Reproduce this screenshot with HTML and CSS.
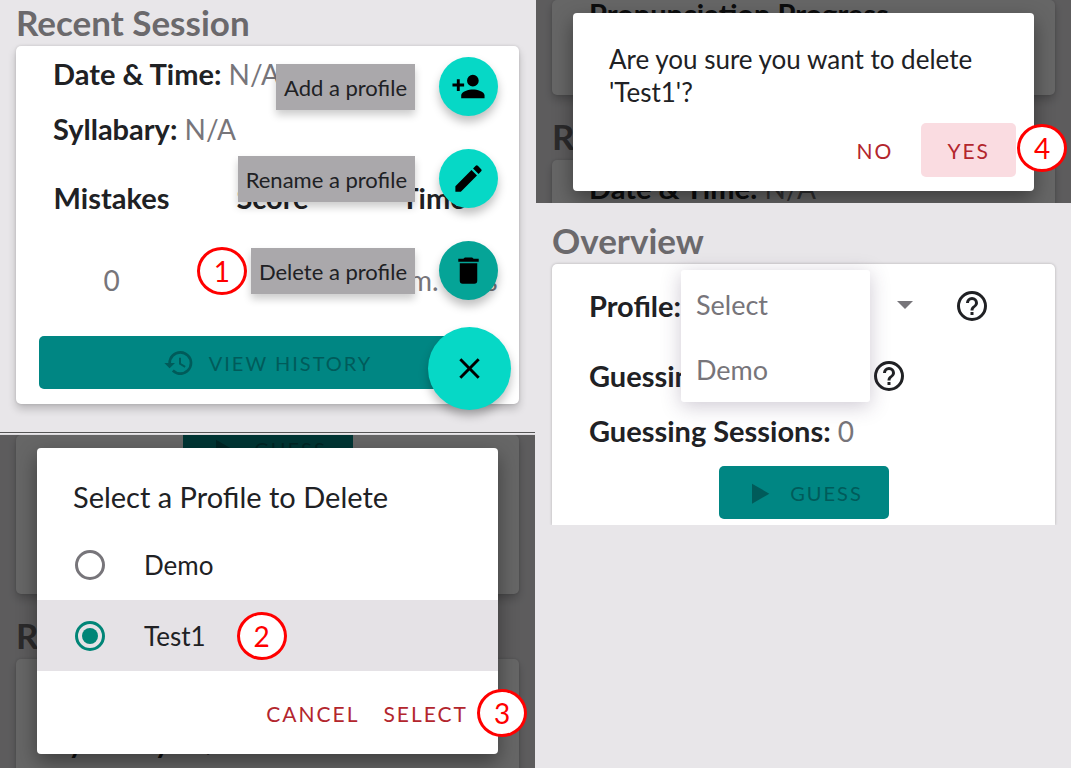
FILE: index.html
```html
<!DOCTYPE html>
<html lang="en">
<head>
<meta charset="utf-8">
<meta name="viewport" content="width=device-width, initial-scale=1">
<title>Delete a profile</title>
<link rel="stylesheet" href="styles.css">
</head>
<body>
<main class="board">
  <div class="column">
    <section class="panel panel-recent">
      <h2 class="heading">Recent Session</h2>
      <div class="card">
        <p class="row"><b>Date &amp; Time:</b> N/A</p>
        <p class="row"><b>Syllabary:</b> N/A</p>
        <table class="stats">
          <thead><tr><th>Mistakes</th><th>Score</th><th>Time</th></tr></thead>
          <tbody><tr><td>0</td><td></td><td>00 m. 00 s</td></tr></tbody>
        </table>
        <button class="btn btn-wide" type="button">
          <svg class="icon" viewBox="0 0 24 24" fill="currentColor" aria-hidden="true"><path d="M13 3a9 9 0 0 0-9 9H1l3.89 3.89.07.14L9 12H6a7 7 0 1 1 7 7 6.9 6.9 0 0 1-4.94-2.06l-1.42 1.42A9 9 0 1 0 13 3zm-1 5v5l4.28 2.54.72-1.21-3.5-2.08V8H12z"/></svg>
          VIEW HISTORY
        </button>
      </div>
      <div class="dial">
        <div class="dial-row">
          <span class="dial-label" id="add">Add a profile</span>
          <button class="fab" type="button" aria-labelledby="add"><svg class="icon-fab" viewBox="0 0 24 24" aria-hidden="true"><path d="M15 12a4 4 0 1 0 0-8 4 4 0 0 0 0 8zm-9-2V7H4v3H1v2h3v3h2v-3h3v-2H6zm9 4c-2.670 0-8 1.340-8 4v2h16v-2c0-2.660-5.330-4-8-4z"/></svg></button>
        </div>
        <div class="dial-row">
          <span class="dial-label" id="rename">Rename a profile</span>
          <button class="fab" type="button" aria-labelledby="rename"><svg class="icon-fab" viewBox="0 0 24 24" aria-hidden="true"><path d="M3 17.250V21h3.750L17.810 9.940l-3.750-3.750L3 17.250zM20.710 7.040a1 1 0 0 0 0-1.410l-2.340-2.340a1 1 0 0 0-1.410 0l-1.830 1.830 3.750 3.750 1.830-1.830z"/></svg></button>
        </div>
        <div class="dial-row">
          <span class="badge">1</span>
          <span class="dial-label" id="delete">Delete a profile</span>
          <button class="fab fab-pressed" type="button" aria-labelledby="delete"><svg class="icon-fab" viewBox="0 0 24 24" aria-hidden="true"><path d="M6 19a2 2 0 0 0 2 2h8a2 2 0 0 0 2-2V7H6v12zM19 4h-3.500l-1-1h-5l-1 1H5v2h14V4z"/></svg></button>
        </div>
        <button class="fab fab-main" type="button" aria-label="Close"><svg class="icon-fab" viewBox="0 0 24 24" aria-hidden="true"><path d="M19 6.410 17.590 5 12 10.590 6.410 5 5 6.410 10.590 12 5 17.590 6.410 19 12 13.410 17.590 19 19 17.590 13.410 12z"/></svg></button>
      </div>
    </section>

    <section class="panel panel-choose">
      <div class="card card-guess">
        <button class="btn btn-guess" type="button" tabindex="-1">
          <svg class="icon" viewBox="0 0 24 24" fill="currentColor" aria-hidden="true"><path d="M6 5v15l13-7.500z"/></svg>
          GUESS
        </button>
      </div>
      <h2 class="heading">Recent Session</h2>
      <div class="card">
        <p class="row"><b>Date &amp; Time:</b> N/A</p>
        <p class="row"><b>Syllabary:</b> N/A</p>
      </div>
      <div class="scrim">
        <form class="dialog" role="dialog" aria-labelledby="choose">
          <h3 class="dialog-title" id="choose">Select a Profile to Delete</h3>
          <label class="option"><input class="radio" type="radio" name="profile">Demo</label>
          <label class="option option-on"><input class="radio" type="radio" name="profile" checked>Test1<span class="badge">2</span></label>
          <div class="actions">
            <button class="action" type="button">CANCEL</button>
            <button class="action" type="button">SELECT</button>
          </div>
          <span class="badge badge-edge">3</span>
        </form>
      </div>
    </section>
  </div>

  <div class="column">
    <section class="panel panel-confirm">
      <div class="card card-progress"><p class="row"><b>Pronunciation Progress</b></p></div>
      <h2 class="heading">Recent Session</h2>
      <div class="card"><p class="row"><b>Date &amp; Time:</b> N/A</p></div>
      <div class="scrim">
        <div class="dialog dialog-confirm" role="dialog" aria-labelledby="confirm">
          <p class="dialog-text" id="confirm">Are you sure you want to delete 'Test1'?</p>
          <div class="actions">
            <button class="action" type="button">NO</button>
            <button class="action action-on" type="button">YES</button>
          </div>
          <span class="badge badge-edge">4</span>
        </div>
      </div>
    </section>

    <section class="panel panel-overview">
      <h2 class="heading">Overview</h2>
      <div class="card card-overview">
        <div class="row row-profile">
          <label for="profile"><b>Profile:</b></label>
          <div class="picker">
            <select class="picker-select" id="profile"><option>Select</option><option>Demo</option></select>
            <svg class="picker-arrow" viewBox="0 0 16 8" aria-hidden="true"><path d="M0 0h16L8 8z"/></svg>
            <ul class="menu"><li class="menu-item">Select</li><li class="menu-item">Demo</li></ul>
          </div>
          <button class="help" type="button" aria-label="Profile help"><svg class="icon-help" viewBox="0 0 24 24" aria-hidden="true"><path d="M11 18h2v-2h-2v2zm1-16a10 10 0 1 0 0 20 10 10 0 0 0 0-20zm0 18a8 8 0 1 1 0-16 8 8 0 0 1 0 16zm0-14a4 4 0 0 0-4 4h2a2 2 0 1 1 4 0c0 2-3 1.750-3 5h2c0-2.250 3-2.500 3-5a4 4 0 0 0-4-4z"/></svg></button>
        </div>
        <div class="row row-progress">
          <span><b>Guessing Progress:</b> 0</span>
          <button class="help" type="button" aria-label="Guessing help"><svg class="icon-help" viewBox="0 0 24 24" aria-hidden="true"><path d="M11 18h2v-2h-2v2zm1-16a10 10 0 1 0 0 20 10 10 0 0 0 0-20zm0 18a8 8 0 1 1 0-16 8 8 0 0 1 0 16zm0-14a4 4 0 0 0-4 4h2a2 2 0 1 1 4 0c0 2-3 1.750-3 5h2c0-2.250 3-2.500 3-5a4 4 0 0 0-4-4z"/></svg></button>
        </div>
        <p class="row"><b>Guessing Sessions:</b> 0</p>
        <button class="btn btn-guess" type="button">
          <svg class="icon" viewBox="0 0 24 24" fill="currentColor" aria-hidden="true"><path d="M6 5v15l13-7.500z"/></svg>
          GUESS
        </button>
      </div>
    </section>
  </div>
</main>
</body>
</html>
```
FILE: styles.css
```css
* { box-sizing: border-box; }

body {
  margin: 0;
  background: #e8e6e9;
  color: #202124;
  font-family: Lato, "Open Sans", sans-serif;
  font-size: 28px;
}

h2, h3, p, ul { margin: 0; padding: 0; }
button, select { font: inherit; color: inherit; border: 0; cursor: pointer; }
b { color: #202124; font-size: 29px; font-weight: 700; }

.board { display: grid; grid-template-columns: 1fr 1fr; gap: 1px; min-height: 100vh; }
.column { display: flex; flex-direction: column; min-width: 0; }
.panel { position: relative; overflow: hidden; padding: 0 16px; }

.heading { height: 46px; color: #6b696c; font-size: 35px; font-weight: 700; line-height: 44px; }
.card {
  display: flow-root;
  padding: 0 23px 15px;
  border-radius: 5px;
  background: #fff;
  box-shadow: 0 5px 8px rgba(0, 0, 0, .2), 0 0 3px rgba(0, 0, 0, .14);
}
.row { height: 55px; padding-left: 14px; color: #77757a; line-height: 55px; white-space: nowrap; }

/* Recent session */
.panel-recent { height: 433px; border-bottom: 1px solid #555; }
.stats {
  width: calc(100% + 26px);
  margin: 0 -18px 14px -8px;
  border-collapse: collapse;
  table-layout: fixed;
  line-height: 83px;
}
.stats th { padding: 0; color: #202124; font-size: 29px; font-weight: 700; text-align: center; }
.stats td { padding: 0; color: #77757a; text-align: center; }

.btn {
  display: flex;
  align-items: center;
  justify-content: center;
  gap: 14px;
  height: 53px;
  padding: 0 24px;
  border-radius: 5px;
  background: #008683;
  color: #005b5a;
  font-size: 20px;
  letter-spacing: 2px;
}
.btn-wide { width: 100%; }
.btn-guess { width: 170px; margin: 8px auto 0; }
.icon { width: 32px; height: 32px; }

.dial {
  position: absolute;
  top: 57px;
  right: 24px;
  display: flex;
  flex-direction: column;
  align-items: flex-end;
  gap: 33px;
}
.dial-row { display: flex; align-items: center; margin-right: 13px; }
.dial-label {
  margin-right: 24px;
  padding: 1px 8px 0;
  background: #aaa8ab;
  box-shadow: 0 5px 8px rgba(0, 0, 0, .2);
  font-size: 22px;
  line-height: 45px;
}
.fab {
  display: grid;
  place-items: center;
  width: 59px;
  height: 59px;
  padding: 0;
  border-radius: 50%;
  background: #06d8c6;
  box-shadow: 0 6px 10px rgba(0, 0, 0, .25);
}
.fab-pressed { background: #05a497; }
.fab-main { width: 83px; height: 83px; margin-top: -6px; }
.icon-fab { width: 35px; height: 35px; }

.badge {
  display: grid;
  place-items: center;
  width: 50px;
  height: 48px;
  margin-right: 4px;
  border: 3px solid #f00;
  border-radius: 50%;
  background: #fff;
  color: #f00;
  font-size: 28px;
  line-height: 42px;
}
.badge-edge { position: absolute; margin: 0; }

/* Dialogs over dimmed screens */
.scrim { position: absolute; inset: 0; padding: 13px 37px; background: rgba(0, 0, 0, .6); }
.dialog {
  position: relative;
  padding-bottom: 14px;
  border-radius: 4px;
  background: #fff;
  box-shadow: 0 8px 20px rgba(0, 0, 0, .4);
}
.panel-choose { flex: 1; margin-top: 1px; border-top: 1px solid #dcdadd; }
.card-guess { height: 159px; }
.card-guess .btn { margin-top: -13px; }
.panel-choose .heading, .panel-confirm .heading { margin-top: 19px; }
.dialog-title { margin-bottom: 14px; padding: 31px 36px 0; font-size: 29px; font-weight: 400; line-height: 36px; }
.option { display: flex; align-items: center; height: 71px; padding-left: 38px; font-size: 26px; }
.option-on { background: #e5e2e6; }
.option .badge { margin-left: 31px; }
.radio {
  appearance: none;
  display: grid;
  place-items: center;
  width: 30px;
  height: 30px;
  margin: 0 39px 0 0;
  border: 3px solid #77757a;
  border-radius: 50%;
}
.radio:checked { border-color: #008577; }
.radio:checked::after { content: ""; width: 16px; height: 16px; border-radius: 50%; background: #008577; }
.actions { display: flex; justify-content: flex-end; padding: 15px 18px 0; }
.action {
  height: 54px;
  padding: 0 12px;
  border-radius: 5px;
  background: none;
  color: #b3262d;
  font-size: 21px;
  letter-spacing: 2px;
}
.dialog .badge-edge { right: -29px; bottom: 17px; }

.panel-confirm { height: 203px; }
.card-progress { height: 95px; }
.card-progress .row { margin-top: -14px; }
.dialog-text { padding: 30px 36px 0; font-size: 26px; line-height: 33px; }
.dialog-confirm .actions { gap: 16px; padding-top: 14px; }
.action-on { padding: 0 26px; background: #fadce1; }
.dialog-confirm .badge-edge { right: -33px; bottom: 19px; }

/* Overview */
.panel-overview { padding-top: 15px; }
.card-overview { padding: 14px 23px 6px; border-radius: 5px 5px 0 0; box-shadow: 0 0 3px rgba(0, 0, 0, .25); }
.row-profile, .row-progress { display: flex; align-items: center; }
.row-profile { margin-bottom: 15px; }
.picker { position: relative; width: 244px; height: 55px; margin-right: 29px; }
.picker-select { width: 100%; height: 100%; padding: 0 14px; appearance: none; background: none; }
.picker-arrow { position: absolute; top: 23px; right: 12px; width: 16px; height: 8px; fill: #77757a; }
.menu {
  position: absolute;
  top: -8px;
  left: 0;
  width: 189px;
  padding-top: 2px;
  list-style: none;
  border-radius: 3px;
  background: #fff;
  box-shadow: 0 4px 20px rgba(60, 40, 80, .25);
}
.menu-item { padding-left: 15px; color: #77757a; font-size: 27px; line-height: 65px; }
.help { display: grid; width: 36px; height: 36px; padding: 0; background: none; }
.icon-help { width: 36px; height: 36px; fill: #202124; }
.row-progress .help { margin-left: 16px; }
```
